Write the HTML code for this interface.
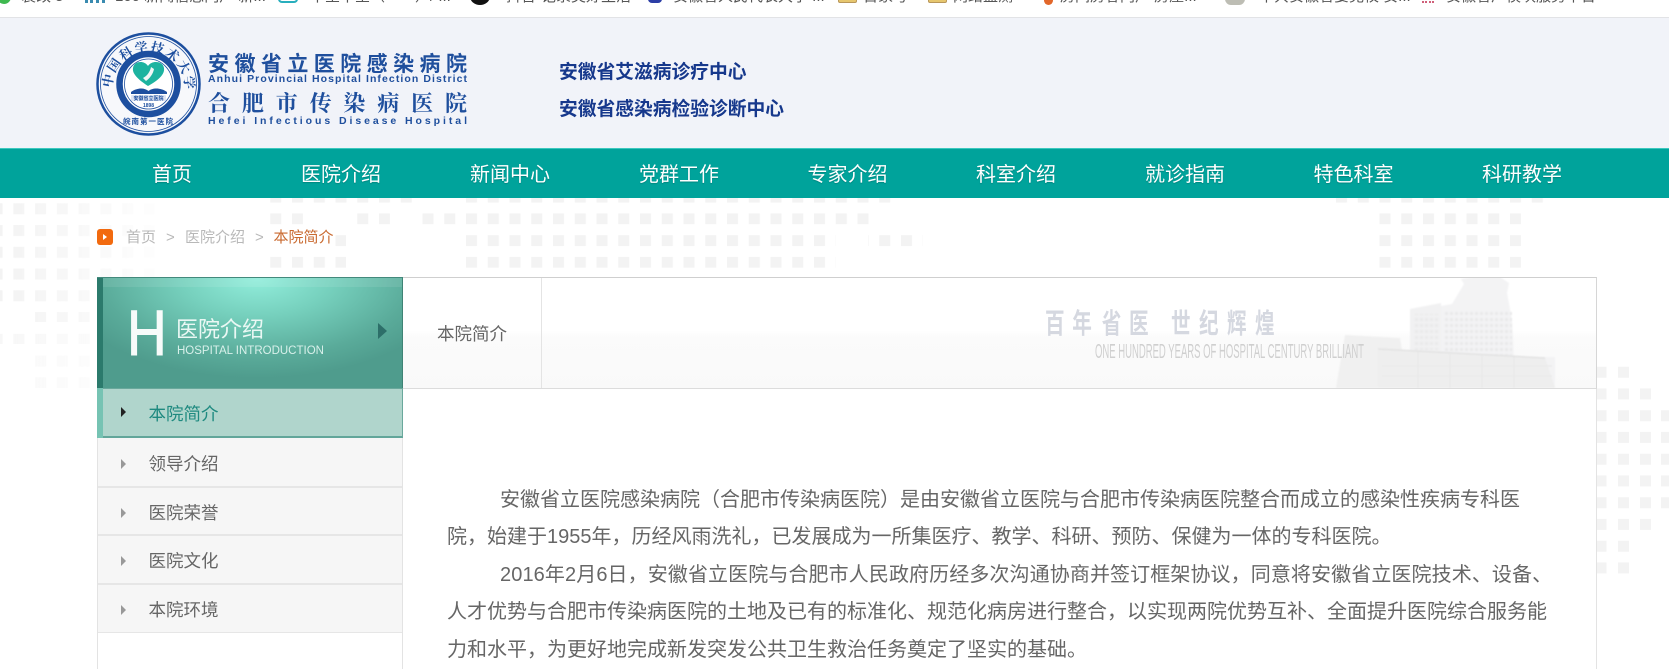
<!DOCTYPE html>
<html lang="zh-CN">
<head>
<meta charset="utf-8">
<title>本院简介</title>
<style>
*{margin:0;padding:0;box-sizing:border-box}
html,body{width:1669px;height:669px;overflow:hidden;background:#fff}
body{position:relative;font-family:"Liberation Sans","Noto Sans CJK SC",sans-serif;color:#666}
.a{position:absolute;white-space:nowrap}
#top{left:0;top:0;width:1669px;height:18px;background:#fff;border-bottom:1px solid #e2e3e6;overflow:hidden}
#top span{position:absolute;top:-14px;font-size:15px;line-height:22px;color:#555;white-space:nowrap}
#top i{position:absolute;display:block}
#hdr{left:0;top:18px;width:1669px;height:130px;background:#f1f3f9}
#nav{left:0;top:148px;width:1669px;height:50px;background:#00a39b;border-top:1px solid #3cc8bf}
.n{position:absolute;top:150px;height:50px;line-height:50px;width:120px;text-align:center;font-size:20px;color:#fff;text-shadow:0 1px 1px rgba(0,70,65,.3)}
.org{left:559px;font-size:18.75px;line-height:24px;font-weight:700;color:#16388c}
.bc{top:228px;font-size:15px;line-height:20px;color:#b8b8b8}
#sh{left:97px;top:277px;width:306px;height:111px;background:radial-gradient(ellipse 200px 100px at 160px 0,#92eedc 0,#76d0bd 38%,#5aab9a 78%,#4f9c8d 100%);border-top:1px solid #43897c;border-right:1px solid #3f8375}
#sh:before{content:"";position:absolute;left:0;top:0;width:6px;height:110px;background:#2b7a6c}
#sh:after{content:"";position:absolute;left:6px;top:0;right:0;height:9px;background:rgba(255,255,255,.09)}
#tab{left:403px;top:277px;width:1194px;height:112px;background:linear-gradient(180deg,#fff 0,#fff 48%,#fbfbfb 54%,#f9f9f9 100%);border-top:1px solid #cfcfcf;border-bottom:1px solid #dcdcdc;border-right:1px solid #d6d6d6}
#main{left:402px;top:389px;width:1195px;height:280px;background:#fff;border-left:1px solid #e3e3e3;border-right:1px solid #e3e3e3}
#side{left:97px;top:633px;width:305px;height:36px;background:#fff;border-left:1px solid #e3e3e3}
.m{position:absolute;left:98px;width:304px;background:#f6f6f6;border-bottom:2px solid #e6e6e6}
.mt{position:absolute;left:148.5px;font-size:17.5px;line-height:24px;color:#666;white-space:nowrap}
.tri{position:absolute;left:121px;width:0;height:0;border-left:5px solid #999;border-top:5px solid transparent;border-bottom:5px solid transparent}
.p{position:absolute;font-size:20px;line-height:30px;color:#666;white-space:nowrap}
</style>
</head>
<body>

<svg class="a" style="left:0;top:0" width="1669" height="669" viewBox="0 0 1669 669">
<defs>
<pattern id="d" patternUnits="userSpaceOnUse" x="9.25" y="191.6" width="21.75" height="21.75"><rect width="11" height="11" fill="#f3f3f3"/></pattern>
<pattern id="l" patternUnits="userSpaceOnUse" x="-8.4" y="203.3" width="21.75" height="21.75"><rect width="11" height="11" fill="#f3f3f3"/></pattern>
<linearGradient id="fd"><stop offset="0" stop-color="#fff"/><stop offset="1" stop-color="#000"/></linearGradient>
<mask id="lm" maskUnits="userSpaceOnUse" x="0" y="198" width="180" height="210"><rect x="0" y="198" width="180" height="210" fill="url(#fd)"/></mask>
</defs>
<g mask="url(#lm)">
<rect x="0" y="198" width="160" height="104" fill="url(#l)"/>
<rect x="30" y="310" width="110" height="12" fill="url(#l)"/>
<rect x="0" y="332" width="140" height="12" fill="url(#l)" opacity=".7"/>
<rect x="30" y="354" width="110" height="34" fill="url(#l)" opacity=".5"/>
</g>
<g fill="url(#d)">
<rect x="270" y="191.6" width="142" height="11"/>
<rect x="466" y="191.6" width="435" height="11"/>
<rect x="270" y="213.3" width="33" height="11"/>
<rect x="357" y="213.3" width="33" height="11"/>
<rect x="422" y="213.3" width="457" height="11"/>
<rect x="335" y="235.1" width="11" height="11"/>
<rect x="466" y="235.1" width="370" height="11"/>
<rect x="868" y="235.1" width="55" height="11"/>
<rect x="270" y="256.8" width="76" height="11"/>
<rect x="466" y="256.8" width="370" height="11"/>
<rect x="1335" y="191.6" width="210" height="11"/>
<rect x="1379" y="213.3" width="142" height="11"/>
<rect x="1379" y="235.1" width="142" height="11"/>
<rect x="1379" y="256.8" width="142" height="11"/>
</g>
<g fill="#f3f3f3">
<rect x="1597" y="366.7" width="9.5" height="11"/><rect x="1618" y="366.7" width="11" height="11"/>
<rect x="1597" y="388.4" width="9.5" height="11"/><rect x="1618" y="388.4" width="11" height="11"/><rect x="1640" y="388.4" width="11" height="11"/>
<rect x="1597" y="410.2" width="9.5" height="11"/><rect x="1618" y="410.2" width="11" height="11"/><rect x="1640" y="410.2" width="11" height="11"/><rect x="1661" y="410.2" width="8" height="11"/>
<rect x="1597" y="431.9" width="9.5" height="11"/><rect x="1618" y="431.9" width="11" height="11"/><rect x="1640" y="431.9" width="11" height="11"/><rect x="1661" y="431.9" width="8" height="11"/>
<rect x="1597" y="453.7" width="9.5" height="11"/><rect x="1618" y="453.7" width="11" height="11"/><rect x="1640" y="453.7" width="11" height="11"/><rect x="1661" y="453.7" width="8" height="11"/>
<rect x="1597" y="475.4" width="9.5" height="11"/><rect x="1618" y="475.4" width="11" height="11"/><rect x="1640" y="475.4" width="11" height="11"/><rect x="1661" y="475.4" width="8" height="11"/>
<rect x="1597" y="497.2" width="9.5" height="11"/><rect x="1618" y="497.2" width="11" height="11"/><rect x="1640" y="497.2" width="11" height="11"/><rect x="1661" y="497.2" width="8" height="11"/>
<rect x="1597" y="518.9" width="9.5" height="11"/><rect x="1618" y="518.9" width="11" height="11"/><rect x="1640" y="518.9" width="11" height="11"/>
<rect x="1597" y="540.7" width="9.5" height="11"/><rect x="1618" y="540.7" width="11" height="11"/>
<rect x="1597" y="562.4" width="9.5" height="11"/><rect x="1618" y="562.4" width="11" height="11"/>
</g>
</svg>

<div class="a" id="top">
<i style="left:-3px;top:-10px;width:14px;height:14px;border-radius:50%;background:#3fb950"></i>
<span style="left:21px">装改 5</span>
<i style="left:85px;top:-8px;width:20px;height:11px;border-bottom:3px dotted #3a8bb0"></i>
<span style="left:115px">100 新闻信息门户 新...</span>
<i style="left:278px;top:-10px;width:20px;height:13px;border:2px solid #28aebd;border-radius:4px"></i>
<span style="left:310px">中呈中呈（　　）/ ...</span>
<i style="left:470px;top:-12px;width:20px;height:17px;border-radius:50%;background:#111"></i>
<span style="left:506px">抖音-记录美好生活</span>
<i style="left:648px;top:-10px;width:14px;height:13px;border-radius:4px;background:#2c3ea6"></i>
<span style="left:673px">安徽省人民代表大学 ...</span>
<i style="left:838px;top:-8px;width:19px;height:11px;background:#e6c66e;border:1px solid #b9975a;border-radius:2px"></i>
<span style="left:863px">百家号</span>
<i style="left:928px;top:-8px;width:19px;height:11px;background:#e6c66e;border:1px solid #b9975a;border-radius:2px"></i>
<span style="left:953px">网络监测</span>
<i style="left:1044px;top:-6px;width:9px;height:11px;border-radius:0 0 6px 6px;background:#e2672a"></i>
<span style="left:1060px">房间房客门户 房屋...</span>
<i style="left:1225px;top:-10px;width:20px;height:15px;border-radius:6px;background:#bdbdb4"></i>
<span style="left:1259px">中共安徽省委党校 安...</span>
<i style="left:1422px;top:0;width:12px;height:3px;border-bottom:2px dotted #d0607a"></i>
<span style="left:1446px">安徽省厂模块服务平台</span>
</div>

<div class="a" id="hdr"></div>

<svg class="a" style="left:0;top:0" width="490" height="148" viewBox="0 0 490 148">
<defs>
<path id="arcT" d="M112 88 A36.5 36.5 0 0 1 185 88"/>
</defs>
<ellipse cx="148.5" cy="84" rx="51" ry="50.5" fill="#f7f8fb" stroke="#1d4f9f" stroke-width="2.5"/>
<ellipse cx="148.5" cy="84" rx="48" ry="47.5" fill="none" stroke="#1d4f9f" stroke-width=".8"/>
<text font-family="'Noto Serif CJK SC',serif" font-size="13" font-weight="700" fill="#1d4f9f" letter-spacing="1.7"><textPath href="#arcT">中国科学技术大学</textPath></text>
<ellipse cx="148.5" cy="84" rx="29" ry="30" fill="#fff" stroke="#1d4f9f" stroke-width="6.5"/>
<ellipse cx="148.5" cy="84" rx="24" ry="25" fill="none" stroke="#1d4f9f" stroke-width=".8"/>
<path d="M148 86 C137 79 132 73 133 68 C134 61 144 60 148 66 C152 60 163 61 164 68 C165 74 159 80 148 86Z" fill="#1db3a0"/>
<path d="M143 78 C147 76 150 72 151 67 L154 69 C153 74 150 78 146 81Z" fill="#f1f6f6"/>
<path d="M131 92 C138 87 145 88 148.5 91 C152 88 160 87 167 92 L167 94 L131 94Z" fill="#1d4f9f"/>
<rect x="131" y="95" width="35" height="6" rx="1" fill="#dfe6f3"/>
<text x="148.5" y="100" text-anchor="middle" font-size="5" font-weight="700" fill="#1d4f9f" font-family="'Noto Sans CJK SC',sans-serif">安徽省立医院</text>
<text x="148.5" y="107" text-anchor="middle" font-size="5" font-weight="700" fill="#1d4f9f">1898</text>
<text x="148.5" y="124" text-anchor="middle" font-size="7.5" font-weight="700" fill="#1d4f9f" letter-spacing="1" font-family="'Noto Sans CJK SC',sans-serif">皖南第一医院</text>
<g fill="#1f4f9d">
<text x="208" y="71" font-size="21" font-weight="700" textLength="259" font-family="'Noto Sans CJK SC',sans-serif">安徽省立医院感染病院</text>
<text x="208" y="82" font-size="10.5" font-weight="700" textLength="259" font-family="'Liberation Sans',sans-serif">Anhui Provincial Hospital Infection District</text>
<text x="208" y="111" font-size="22" font-weight="700" textLength="259" font-family="'Noto Serif CJK SC',serif">合肥市传染病医院</text>
<text x="208" y="124" font-size="10.5" font-weight="700" textLength="259" font-family="'Liberation Sans',sans-serif">Hefei Infectious Disease Hospital</text>
</g>
</svg>

<div class="a org" style="top:60px">安徽省艾滋病诊疗中心</div>
<div class="a org" style="top:97px">安徽省感染病检验诊断中心</div>

<div class="a" id="nav"></div>
<div class="n" style="left:112px">首页</div>
<div class="n" style="left:281px">医院介绍</div>
<div class="n" style="left:450px">新闻中心</div>
<div class="n" style="left:619px">党群工作</div>
<div class="n" style="left:787.5px">专家介绍</div>
<div class="n" style="left:956px">科室介绍</div>
<div class="n" style="left:1125px">就诊指南</div>
<div class="n" style="left:1293.5px">特色科室</div>
<div class="n" style="left:1462px">科研教学</div>

<div class="a" style="left:97px;top:229px;width:16px;height:16px;border-radius:3px;background:#f26a0f"></div>
<div class="a" style="left:103px;top:234px;width:0;height:0;border-left:4px solid #fff;border-top:3px solid transparent;border-bottom:3px solid transparent"></div>
<div class="a bc" style="left:126px">首页</div>
<div class="a bc" style="left:166px">&gt;</div>
<div class="a bc" style="left:185px">医院介绍</div>
<div class="a bc" style="left:255px">&gt;</div>
<div class="a bc" style="left:273.5px;color:#c96a30">本院简介</div>

<div class="a" id="main"></div>
<div class="a" id="tab"></div>
<div class="a" style="left:541px;top:278px;width:1px;height:110px;background:#e4e4e4"></div>
<div class="a" style="left:437px;top:322px;font-size:17.5px;line-height:24px;color:#666">本院简介</div>

<svg class="a" style="left:0;top:0" width="1669" height="669" viewBox="0 0 1669 669">
<defs>
<filter id="bl" x="-5%" y="-5%" width="110%" height="110%"><feGaussianBlur stdDeviation=".7"/></filter>
<pattern id="w" patternUnits="userSpaceOnUse" width="5" height="6"><rect width="3" height="3" fill="#e9e9ea"/></pattern>
<clipPath id="bc"><rect x="1300" y="278" width="280" height="110"/></clipPath>
</defs>
<g clip-path="url(#bc)" filter="url(#bl)">
<path d="M1441 388V306L1452 304L1464 284L1461 279L1473 277H1500L1509 283L1507 293L1512 320L1514 357H1555V388Z" fill="#f3f3f4"/>
<path d="M1410 388V309L1441 303V388Z" fill="#f1f1f2"/>
<path d="M1445 310H1512V355H1445Z" fill="url(#w)"/>
<path d="M1414 314H1440V350H1414Z" fill="url(#w)"/>
<path d="M1336 388L1345 335L1400 338L1402 350L1378 349V388Z" fill="#f0f0f0"/>
<path d="M1378 349L1545 358L1555 388H1378Z" fill="#eeeeee"/>
<path d="M1378 349L1545 358" stroke="#e2e2e2" stroke-width="1.5" fill="none"/>
<path d="M1418 352V388M1450 354V388M1482 355V388M1514 357V388" stroke="#e6e6e6" fill="none"/>
<path d="M1382 366H1552M1382 376H1552" stroke="#e8e8e8" fill="none"/>
</g>
<text transform="translate(1045 333) scale(.7 1)" x="0 39 81 120 180 220 260 300" font-size="28" font-weight="700" fill="#d5d8e0" font-family="'Noto Sans CJK SC',sans-serif">百年省医世纪辉煌</text>
<text x="1095" y="358" font-size="20" textLength="269" lengthAdjust="spacingAndGlyphs" fill="#cfcfcf" font-family="'Liberation Sans',sans-serif">ONE HUNDRED YEARS OF HOSPITAL CENTURY BRILLIANT</text>
</svg>

<div class="a" id="sh"></div>
<div class="a" style="left:127px;top:303px;font-family:'Liberation Sans',sans-serif;font-size:64px;line-height:60px;color:#f7fbfa;transform-origin:left top;transform:scale(.86,1);-webkit-text-stroke:1px #f7fbfa">H</div>
<div class="a" style="left:176px;top:315px;font-size:22px;line-height:30px;color:#eaf8f4">医院介绍</div>
<div class="a" style="left:177px;top:343px;font-size:11.5px;line-height:16px;color:#d8f0ea">HOSPITAL INTRODUCTION</div>
<div class="a" style="left:378px;top:323px;width:0;height:0;border-left:9px solid #2d6f69;border-top:8px solid transparent;border-bottom:8px solid transparent"></div>

<div class="a" style="left:97px;top:388px;width:306px;height:50px;background:#b0d5cc;border-bottom:2px solid #62a69a;border-right:1px solid #6aa89c;border-top:1px solid #6aa89c"></div>
<div class="a" style="left:97px;top:388px;width:6px;height:50px;background:#76c3b3"></div>
<div class="tri" style="top:407px;border-left-color:#222"></div>
<div class="mt" style="left:148.5px;top:402px;color:#1f8a80">本院简介</div>

<div class="m" style="top:438px;height:50px"></div>
<div class="m" style="top:488px;height:48px"></div>
<div class="m" style="top:536px;height:49px"></div>
<div class="m" style="top:585px;height:49px"></div>
<div class="a" id="side"></div>
<div class="a" style="left:97px;top:438px;width:1px;height:231px;background:#e3e3e3"></div>
<div class="a" style="left:402px;top:438px;width:1px;height:231px;background:#e3e3e3"></div>
<div class="tri" style="top:459px"></div><div class="mt" style="top:452px">领导介绍</div>
<div class="tri" style="top:508px"></div><div class="mt" style="top:501px">医院荣誉</div>
<div class="tri" style="top:556px"></div><div class="mt" style="top:549px">医院文化</div>
<div class="tri" style="top:605px"></div><div class="mt" style="top:598px">本院环境</div>

<div class="p" style="left:500px;top:485px">安徽省立医院感染病院（合肥市传染病医院）是由安徽省立医院与合肥市传染病医院整合而成立的感染性疾病专科医</div>
<div class="p" style="left:447px;top:522px">院，始建于1955年，历经风雨洗礼，已发展成为一所集医疗、教学、科研、预防、保健为一体的专科医院。</div>
<div class="p" style="left:500px;top:560px;letter-spacing:.1px">2016年2月6日，安徽省立医院与合肥市人民政府历经多次沟通协商并签订框架协议，同意将安徽省立医院技术、设备、</div>
<div class="p" style="left:447px;top:597px">人才优势与合肥市传染病医院的土地及已有的标准化、规范化病房进行整合，以实现两院优势互补、全面提升医院综合服务能</div>
<div class="p" style="left:447px;top:635px">力和水平，为更好地完成新发突发公共卫生救治任务奠定了坚实的基础。</div>

</body>
</html>
